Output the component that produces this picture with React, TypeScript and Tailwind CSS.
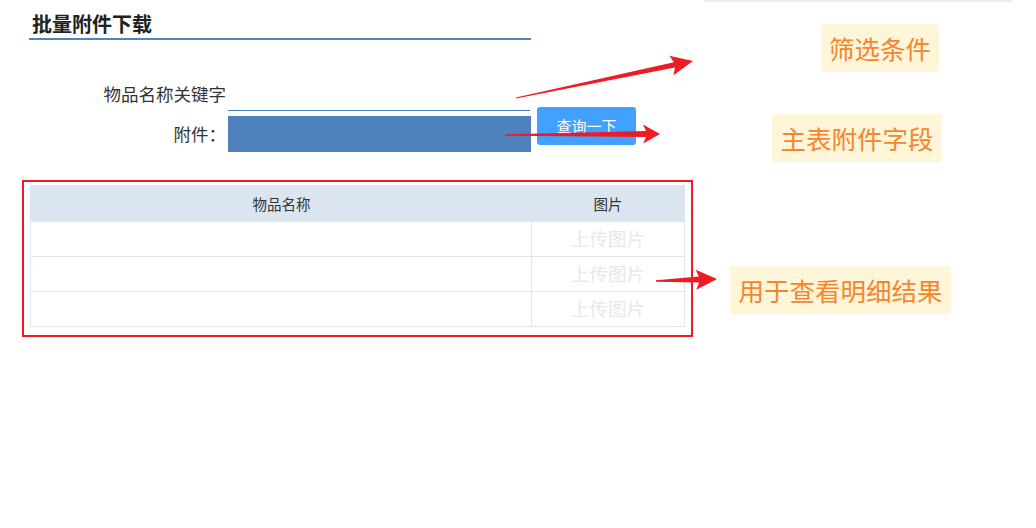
import React from "react";

type Pt = [number, number];

// Tapered annotation arrow: thin at the tail, wider near the head.
function arrowPoints(tail: Pt, tip: Pt, headLen: number, headHalf: number, neckHalf: number, tailHalf: number) {
  const dx = tip[0] - tail[0];
  const dy = tip[1] - tail[1];
  const len = Math.hypot(dx, dy);
  const ux = dx / len;
  const uy = dy / len;
  const nx = -uy;
  const ny = ux;
  const bx = tip[0] - ux * headLen;
  const by = tip[1] - uy * headLen;
  const kx = bx + ux * 3;
  const ky = by + uy * 3;
  const pts: Pt[] = [
    [tail[0] + nx * tailHalf, tail[1] + ny * tailHalf],
    [kx + nx * neckHalf, ky + ny * neckHalf],
    [bx + nx * headHalf, by + ny * headHalf],
    tip,
    [bx - nx * headHalf, by - ny * headHalf],
    [kx - nx * neckHalf, ky - ny * neckHalf],
    [tail[0] - nx * tailHalf, tail[1] - ny * tailHalf],
  ];
  return pts.map((p) => `${p[0].toFixed(1)},${p[1].toFixed(1)}`).join(" ");
}

const font = { fontFamily: '"Noto Sans CJK SC", "Noto Sans", sans-serif' };

function Callout({ text, className }: { text: string; className: string }) {
  return (
    <div
      className={`absolute flex items-center justify-center rounded-[3px] bg-[#fff5d8] text-[25.5px] leading-none text-[#f5862e] ${className}`}
    >
      {text}
    </div>
  );
}

export default function App() {
  const rows = [0, 1, 2];
  return (
    <div className="relative h-[528px] w-[1036px] overflow-hidden bg-white" style={font}>
      <div className="absolute left-[705px] top-0 h-[2px] w-[307px] bg-[#ececec]" />

      {/* page title */}
      <div className="pl-[29px] pt-[13px]">
        <div className="w-[502px] border-b-2 border-[#4f81c4] pb-[3px] pl-[3px] text-[20px] font-bold leading-[22px] text-[#222]">
          批量附件下载
        </div>
      </div>

      {/* filter form */}
      <div className="mt-[40px] flex items-end">
        <div className="w-[226px] pb-[6px] text-right text-[17.5px] leading-[22px] text-[#333]">物品名称关键字</div>
        <div className="ml-[2px] h-[31px] w-[302px] border-b border-[#4a7cc0]" />
      </div>
      <div className="mt-[5px] flex items-start">
        <div className="flex h-[36px] w-[226px] items-center justify-end text-[17.5px] text-[#333]">附件：</div>
        <div className="ml-[2px] h-[36px] w-[303px] bg-[#4f81bd]" />
        <button className="ml-[6px] mt-[-9px] flex h-[38px] w-[99px] items-center justify-center rounded-[3px] bg-[#42a0ff] text-[15px] text-white">
          查询一下
        </button>
      </div>

      {/* detail table */}
      <div className="ml-[22px] mt-[28px] w-[671px] border-2 border-[#ed1c24] pb-[8px] pl-[6px] pr-[6px] pt-[3px]">
        <div className="w-[655px] border border-[#dde6ef]">
          <div className="grid h-[35px] grid-cols-[501px_1fr] bg-[#dbe5f0] text-[14.5px] text-[#333]">
            <div className="flex items-center justify-center">物品名称</div>
            <div className="flex items-center justify-center">图片</div>
          </div>
          {rows.map((r) => (
            <div key={r} className="grid h-[35px] grid-cols-[501px_1fr] border-t border-[#dde6ef]">
              <div className="border-r border-[#dde6ef]" />
              <div className="flex items-center justify-center text-[18.5px] text-[#e8e8e8]">上传图片</div>
            </div>
          ))}
        </div>
      </div>

      {/* annotations */}
      <Callout text="筛选条件" className="left-[821px] top-[24px] h-[48px] w-[118px]" />
      <Callout text="主表附件字段" className="left-[772px] top-[114px] h-[48px] w-[170px]" />
      <Callout text="用于查看明细结果" className="left-[730px] top-[266px] h-[48px] w-[221px]" />

      <svg className="pointer-events-none absolute left-0 top-0" width="1036" height="528">
        <polygon fill="#ed1c24" points={arrowPoints([516, 98], [693, 61], 22, 10, 2.6, 0.6)} />
        <polygon fill="#ed1c24" points={arrowPoints([505, 135], [660, 134], 17, 9.5, 3, 0.8)} />
        <polygon fill="#ed1c24" points={arrowPoints([656, 281], [717, 279], 21, 10, 3, 0.8)} />
      </svg>
    </div>
  );
}
